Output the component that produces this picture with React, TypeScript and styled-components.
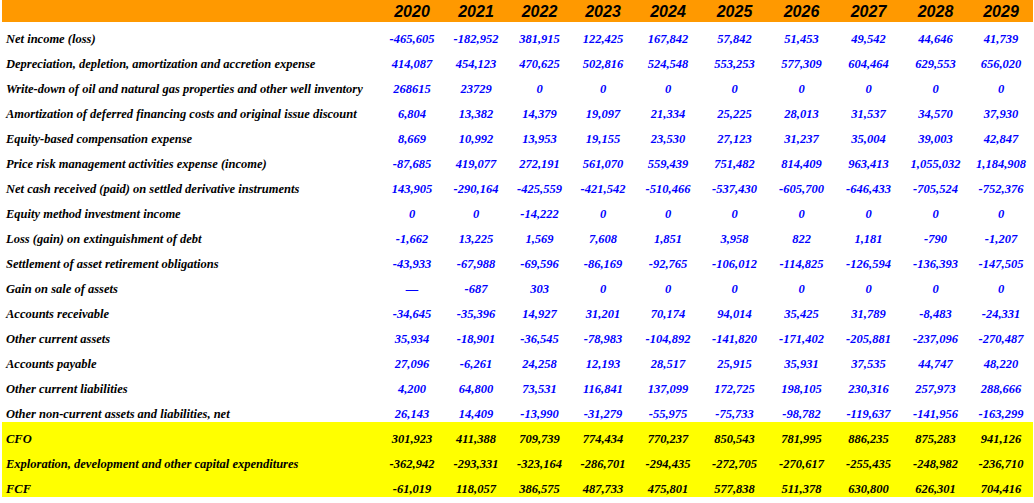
import React from "react";
import styled, { createGlobalStyle } from "styled-components";

const GlobalStyle = createGlobalStyle`
  html, body { margin: 0; padding: 0; background: #ffffff; }
  body { font-family: "Liberation Serif", serif; }
`;

const YEARS = ["2020", "2021", "2022", "2023", "2024", "2025", "2026", "2027", "2028", "2029"];

type Line = { label: string; values: string[] };

const BODY: Line[] = [
  { label: "Net income (loss)", values: ["-465,605", "-182,952", "381,915", "122,425", "167,842", "57,842", "51,453", "49,542", "44,646", "41,739"] },
  { label: "Depreciation, depletion, amortization and accretion expense", values: ["414,087", "454,123", "470,625", "502,816", "524,548", "553,253", "577,309", "604,464", "629,553", "656,020"] },
  { label: "Write-down of oil and natural gas properties and other well inventory", values: ["268615", "23729", "0", "0", "0", "0", "0", "0", "0", "0"] },
  { label: "Amortization of deferred financing costs and original issue discount", values: ["6,804", "13,382", "14,379", "19,097", "21,334", "25,225", "28,013", "31,537", "34,570", "37,930"] },
  { label: "Equity-based compensation expense", values: ["8,669", "10,992", "13,953", "19,155", "23,530", "27,123", "31,237", "35,004", "39,003", "42,847"] },
  { label: "Price risk management activities expense (income)", values: ["-87,685", "419,077", "272,191", "561,070", "559,439", "751,482", "814,409", "963,413", "1,055,032", "1,184,908"] },
  { label: "Net cash received (paid) on settled derivative instruments", values: ["143,905", "-290,164", "-425,559", "-421,542", "-510,466", "-537,430", "-605,700", "-646,433", "-705,524", "-752,376"] },
  { label: "Equity method investment income", values: ["0", "0", "-14,222", "0", "0", "0", "0", "0", "0", "0"] },
  { label: "Loss (gain) on extinguishment of debt", values: ["-1,662", "13,225", "1,569", "7,608", "1,851", "3,958", "822", "1,181", "-790", "-1,207"] },
  { label: "Settlement of asset retirement obligations", values: ["-43,933", "-67,988", "-69,596", "-86,169", "-92,765", "-106,012", "-114,825", "-126,594", "-136,393", "-147,505"] },
  { label: "Gain on sale of assets", values: ["\u2014", "-687", "303", "0", "0", "0", "0", "0", "0", "0"] },
  { label: "Accounts receivable", values: ["-34,645", "-35,396", "14,927", "31,201", "70,174", "94,014", "35,425", "31,789", "-8,483", "-24,331"] },
  { label: "Other current assets", values: ["35,934", "-18,901", "-36,545", "-78,983", "-104,892", "-141,820", "-171,402", "-205,881", "-237,096", "-270,487"] },
  { label: "Accounts payable", values: ["27,096", "-6,261", "24,258", "12,193", "28,517", "25,915", "35,931", "37,535", "44,747", "48,220"] },
  { label: "Other current liabilities", values: ["4,200", "64,800", "73,531", "116,841", "137,099", "172,725", "198,105", "230,316", "257,973", "288,666"] },
  { label: "Other non-current assets and liabilities, net", values: ["26,143", "14,409", "-13,990", "-31,279", "-55,975", "-75,733", "-98,782", "-119,637", "-141,956", "-163,299"] },
];

const TOTALS: Line[] = [
  { label: "CFO", values: ["301,923", "411,388", "709,739", "774,434", "770,237", "850,543", "781,995", "886,235", "875,283", "941,126"] },
  { label: "Exploration, development and other capital expenditures", values: ["-362,942", "-293,331", "-323,164", "-286,701", "-294,435", "-272,705", "-270,617", "-255,435", "-248,982", "-236,710"] },
  { label: "FCF", values: ["-61,019", "118,057", "386,575", "487,733", "475,801", "577,838", "511,378", "630,800", "626,301", "704,416"] },
];

const COLS = "378px 64px 64px 63px 64px 66px 67px 67px 67px 67px 64px";

const Sheet = styled.div`
  margin-left: 2px;
  width: 1031px;
  display: flex;
  flex-direction: column;
`;

type Variant = "header" | "body" | "total";

const Row = styled.div<{ $variant: Variant }>`
  display: grid;
  grid-template-columns: ${COLS};
  height: ${(p) => (p.$variant === "header" ? "22px" : "25px")};
  background: ${(p) =>
    p.$variant === "header" ? "#ff9900" : p.$variant === "total" ? "#ffff00" : "#ffffff"};
`;

const Label = styled.div`
  display: flex;
  align-items: flex-end;
  padding: 0 0 2px 4px;
  font-family: "Liberation Serif", "Times New Roman", serif;
  font-weight: bold;
  font-style: italic;
  font-size: 12.5px;
  line-height: 1;
  color: #000000;
  white-space: nowrap;
  overflow: hidden;
`;

const Value = styled.div<{ $variant: Variant }>`
  display: flex;
  align-items: flex-end;
  justify-content: center;
  padding-bottom: 2px;
  font-family: ${(p) =>
    p.$variant === "header"
      ? `"Liberation Sans", Arial, sans-serif`
      : `"Liberation Serif", "Times New Roman", serif`};
  font-size: ${(p) => (p.$variant === "header" ? "16px" : "12.5px")};
  font-weight: bold;
  font-style: italic;
  line-height: 1;
  color: ${(p) => (p.$variant === "body" ? "#0000ff" : "#000000")};
  white-space: nowrap;
`;

function SheetRow({ line, variant }: { line: Line; variant: Variant }) {
  return (
    <Row $variant={variant}>
      <Label>{line.label}</Label>
      {line.values.map((v, i) => (
        <Value key={i} $variant={variant}>
          {v}
        </Value>
      ))}
    </Row>
  );
}

export default function App() {
  return (
    <>
      <GlobalStyle />
      <Sheet>
        <SheetRow line={{ label: "", values: YEARS }} variant="header" />
        {BODY.map((l) => (
          <SheetRow key={l.label} line={l} variant="body" />
        ))}
        {TOTALS.map((l) => (
          <SheetRow key={l.label} line={l} variant="total" />
        ))}
      </Sheet>
    </>
  );
}
